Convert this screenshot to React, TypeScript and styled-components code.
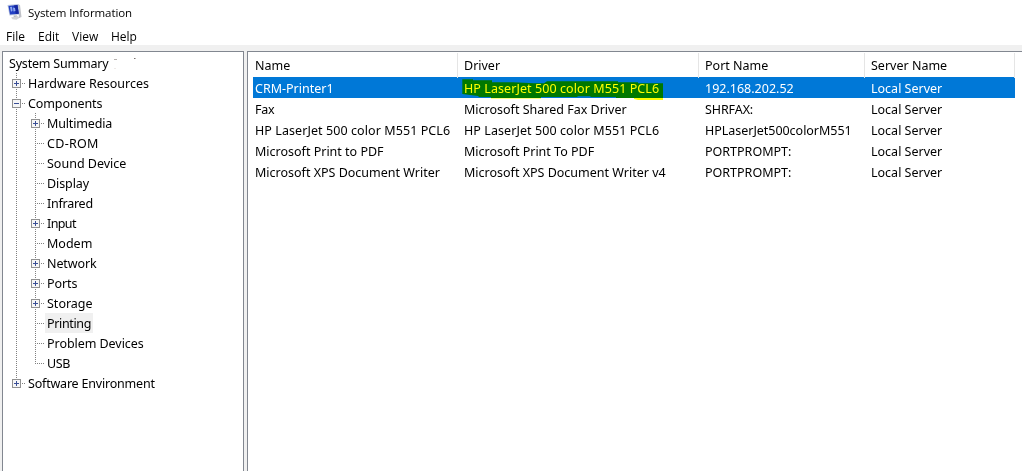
import React from 'react';
import styled, { createGlobalStyle } from 'styled-components';

const GlobalStyle = createGlobalStyle`
  * { box-sizing: border-box; }
  body { margin: 0; background: #fff; }
`;

const Window = styled.div`
  display: flex;
  flex-direction: column;
  width: 1022px;
  height: 471px;
  overflow: hidden;
  background: #fff;
  color: #000;
  font-family: 'Noto Sans', 'Open Sans', sans-serif;
  font-size: 12.5px;
  white-space: nowrap;
`;

const TitleBar = styled.header`
  display: flex;
  align-items: center;
  height: 24px;
  padding-left: 7px;
  gap: 5px;
  font-family: 'Open Sans', sans-serif;
  font-size: 11.5px;
  letter-spacing: -0.08px;
`;

const MenuBar = styled.nav`
  display: flex;
  align-items: center;
  height: 21px;
  padding: 4px 0 0 6px;
  font-family: 'Open Sans', sans-serif;
  font-size: 12px;
`;

const MenuItem = styled.span<{ $w: number }>`
  width: ${p => p.$w}px;
`;

const Body = styled.main`
  display: flex;
  flex: 1;
  gap: 3px;
  padding: 6px 0 0 2px;
  background: #f0f0f0;
`;

const TreePanel = styled.section`
  width: 242px;
  padding-top: 1px;
  border: solid #828790;
  border-width: 1px 1px 0;
  background: #fff;
`;

const TreeRow = styled.div`
  display: flex;
  height: 20px;
`;

const Label = styled.span<{ $selected?: boolean; $track?: number }>`
  height: 20px;
  padding: 0 2px;
  line-height: 22px;
  letter-spacing: ${p => p.$track ?? 0}px;
  background: ${p => (p.$selected ? '#f0f0f0' : 'transparent')};
`;

const RootLabel = styled(Label)`
  padding-left: 6px;
`;

const Lines = styled.svg`
  display: block;
  flex: none;
`;

const ListPanel = styled.section`
  flex: 1;
  padding: 1px 0 0 5px;
  border: solid #828790;
  border-width: 1px 0 0 1px;
  background: #fff;
`;

const ListRow = styled.div<{ $selected?: boolean }>`
  display: grid;
  grid-template-columns: 205px 241px 166px 150px;
  width: 762px;
  height: 21px;
  line-height: 23px;
  color: ${p => (p.$selected ? '#fff' : '#000')};
  background: ${p => (p.$selected ? '#0078d7' : 'transparent')};
`;

const HeaderRow = styled(ListRow)`
  height: 24px;
  line-height: 25px;
`;

const Cell = styled.span<{ $track?: number }>`
  position: relative;
  height: 100%;
  padding-left: 6px;
  letter-spacing: ${p => p.$track ?? 0}px;
  &:first-child { padding-left: 2px; }
`;

const HeaderCell = styled(Cell)`
  border-right: 1px solid #e5e5e5;
`;

const Marker = styled.svg`
  position: absolute;
  left: 4px;
  top: 0;
  mix-blend-mode: multiply;
`;

type Node = { label: string; level: 0 | 1; box?: '+' | '-'; last?: boolean; selected?: boolean; track?: number };

const nodes: Node[] = [
  { label: 'Hardware Resources', level: 0, box: '+' },
  { label: 'Components', level: 0, box: '-', track: -0.1 },
  { label: 'Multimedia', level: 1, box: '+', track: -0.15 },
  { label: 'CD-ROM', level: 1, track: 0.3 },
  { label: 'Sound Device', level: 1 },
  { label: 'Display', level: 1, track: -0.1 },
  { label: 'Infrared', level: 1, track: -0.25 },
  { label: 'Input', level: 1, box: '+', track: -0.6 },
  { label: 'Modem', level: 1 },
  { label: 'Network', level: 1, box: '+', track: -0.1 },
  { label: 'Ports', level: 1, box: '+', track: -0.1 },
  { label: 'Storage', level: 1, box: '+' },
  { label: 'Printing', level: 1, selected: true, track: -0.35 },
  { label: 'Problem Devices', level: 1, track: -0.05 },
  { label: 'USB', level: 1, last: true, track: -0.4 },
  { label: 'Software Environment', level: 0, box: '+', last: true, track: -0.2 },
];

function Branch({ node }: { node: Node }) {
  const cx = node.level ? 32 : 13;
  const w = node.level ? 42 : 23;
  const dots = { stroke: '#808080', strokeDasharray: '1 1' };
  return (
    <Lines width={w} height={20} viewBox={`0 0 ${w} 20`} shapeRendering="crispEdges">
      {node.level === 1 && <path d="M13.5 0V20" {...dots} />}
      <path d={`M${cx + 0.5} 0V${node.last ? 11 : 20}`} {...dots} />
      <path d={`M${cx} 10.5H${cx + 9}`} {...dots} />
      {node.box && (
        <>
          <rect x={cx - 4} y={6} width={9} height={9} fill="#919191" />
          <rect x={cx - 3} y={7} width={7} height={7} fill="#f6f6f6" />
          <path d={`M${cx - 2} 10.5h5`} stroke="#3a4f96" />
          {node.box === '+' && <path d={`M${cx + 0.5} 8v5`} stroke="#3a4f96" />}
        </>
      )}
    </Lines>
  );
}

const HP = 'HP LaserJet 500 color M551 PCL6';
const tracking: Record<string, number> = { [HP]: 0.08, HPLaserJet500colorM551: -0.03, Fax: -0.2, 'SHRFAX:': -0.1 };

const rows = [
  ['Fax', 'Microsoft Shared Fax Driver', 'SHRFAX:', 'Local Server'],
  [HP, HP, 'HPLaserJet500colorM551', 'Local Server'],
  ['Microsoft Print to PDF', 'Microsoft Print To PDF', 'PORTPROMPT:', 'Local Server'],
  ['Microsoft XPS Document Writer', 'Microsoft XPS Document Writer v4', 'PORTPROMPT:', 'Local Server'],
];

function ComputerIcon() {
  return (
    <svg width="16" height="18" viewBox="0 0 16 18">
      <path d="M6.500 12.500h3.500l.5 2h-3.500z" fill="#a9abb2" />
      <path d="M4 14.500l6-1.500 3 1.500-3.500 2.200-4-.4z" fill="#d3d4d6" />
      <path d="M11 1.500l2 .5 1.500 12-2.500 1z" fill="#c0c2c8" />
      <path d="M.5 2L11.500 1l1.300 10.500-10.300 1z" fill="#b9c4dd" />
      <path d="M1.500 3L10.500 2l1.300 8.700-8.800.8z" fill="#2340c4" />
      <path d="M7 2.400L10.500 2l1.300 8.700-3 .3z" fill="#15279f" />
      <path d="M3 4l2-.2.500 4-1.500 1zM6 4.500l2 .5.500 3-2 .5z" fill="#8fa9ee" />
    </svg>
  );
}

export default function App() {
  return (
    <Window>
      <GlobalStyle />
      <TitleBar>
        <ComputerIcon />
        <span>System Information</span>
      </TitleBar>
      <MenuBar>
        <MenuItem $w={32}>File</MenuItem>
        <MenuItem $w={34}>Edit</MenuItem>
        <MenuItem $w={39}>View</MenuItem>
        <MenuItem $w={40}>Help</MenuItem>
      </MenuBar>
      <Body>
        <TreePanel>
          <TreeRow>
            <RootLabel $track={-0.2}>System Summary</RootLabel>
            <Lines width="34" height="20" viewBox="0 0 34 20">
              <path d="M4 6.500h3" stroke="#b5b0ae" />
              <path d="M24 5.500h1.500" stroke="#776f6b" />
              <path d="M4 15.500h2" stroke="#eeeae8" />
            </Lines>
          </TreeRow>
          {nodes.map(n => (
            <TreeRow key={n.label}>
              <Branch node={n} />
              <Label $selected={n.selected} $track={n.track}>{n.label}</Label>
            </TreeRow>
          ))}
        </TreePanel>
        <ListPanel>
          <HeaderRow>
            {['Name', 'Driver', 'Port Name', 'Server Name'].map(h => (
              <HeaderCell key={h}>{h}</HeaderCell>
            ))}
          </HeaderRow>
          <ListRow $selected>
            <Cell>CRM-Printer1</Cell>
            <Cell $track={tracking[HP]}>
              {HP}
              <Marker width="203" height="24" viewBox="0 0 203 24">
                <path
                  d="M.3 2.300H11v1h19v2h21l21 1h10l3-2h71v1h20v1h25V23h-25l-4-1v-1h-18v-1h-25l-1-.7h-12l-1 .7H79v1.500H29V20H17l-1-1L.3 17z"
                  fill="#ff0"
                />
              </Marker>
            </Cell>
            <Cell>192.168.202.52</Cell>
            <Cell>Local Server</Cell>
          </ListRow>
          {rows.map(r => (
            <ListRow key={r[0]}>
              {r.map((c, i) => (
                <Cell key={i} $track={tracking[c]}>{c}</Cell>
              ))}
            </ListRow>
          ))}
        </ListPanel>
      </Body>
    </Window>
  );
}
